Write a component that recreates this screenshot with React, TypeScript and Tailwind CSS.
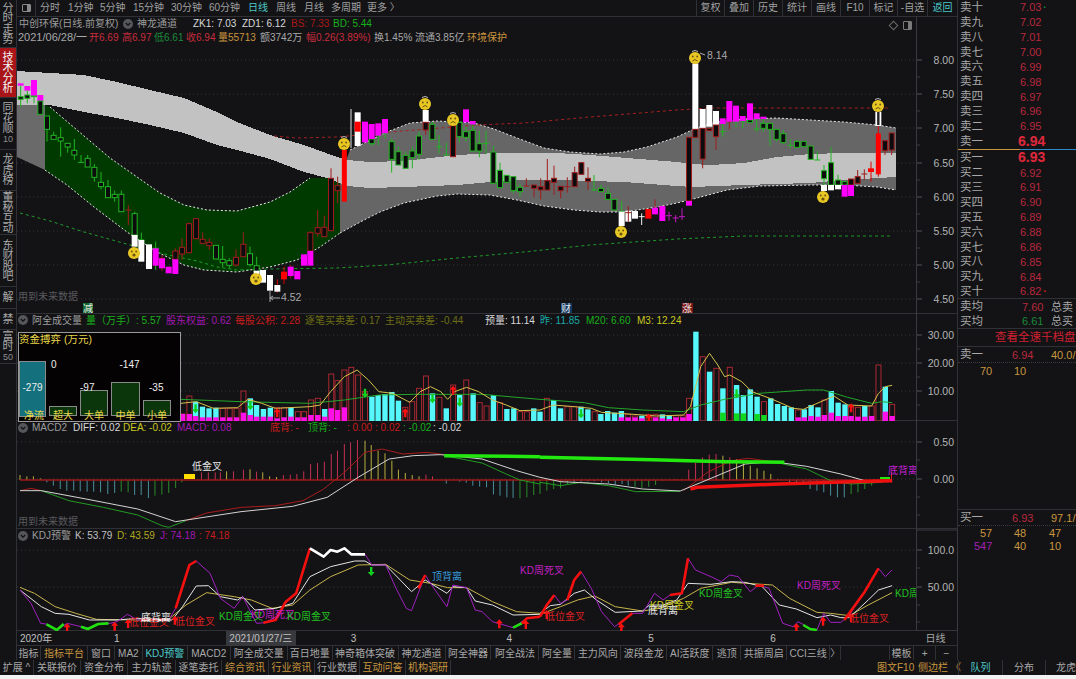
import React from "react";

type Pt = [number, number];
type Conv = (x: number, y: number) => Pt;
// candle: [zoom x, kind, body top, body bottom, wick high, wick low]
type Candle = [number, string, number, number, number?, number?];

const z9: Conv = (x, y) => [17 + x / 3, 70 + y / 3];
const z10: Conv = (x, y) => [237 + x / 3, 70 + y / 3];
const z11: Conv = (x, y) => [457 + x / 3, 70 + y / 3];
const z12: Conv = (x, y) => [677 + x / 3, 40 + y / 3];
const z5: Conv = (x, y) => [x / 2.904, 310 + y / 3];
const z6: Conv = (x, y) => [540 + x / 2.925, 310 + y / 3];
const z7: Conv = (x, y) => [x / 2.904, 525 + y / 3];
const z8: Conv = (x, y) => [540 + x / 2.925, 525 + y / 3];

const path = (list: Pt[], conv?: Conv) =>
  list.map(([x, y]) => (conv ? conv(x, y) : [x, y]).join(",")).join(" ");

const lightTop: Pt[] = [[17, 71], [50, 73], [84, 75], [117, 82], [150, 90], [184, 98], [217, 112], [237, 122], [270, 135], [304, 145], [337, 157], [347, 160], [370, 162], [404, 161], [457, 155], [497, 153], [557, 153], [590, 155], [677, 162], [692, 164], [710, 165], [744, 163], [777, 157], [810, 154], [844, 153], [896, 153]];
const lightBot: Pt[] = [[17, 105], [50, 105], [84, 112], [117, 118], [150, 125], [184, 133], [217, 145], [237, 150], [270, 159], [304, 172], [327, 178], [347, 186], [370, 188], [404, 187], [457, 185], [490, 182], [524, 180], [557, 180], [590, 181], [624, 182], [677, 186], [692, 187], [744, 185], [810, 183], [844, 180], [896, 177]];
const cloudTop: Pt[] = [[340, 178], [347, 158], [350, 150], [387, 132], [410, 123], [437, 121], [457, 122], [474, 123], [494, 129], [517, 138], [544, 148], [570, 152], [600, 154], [624, 152], [647, 147], [677, 137], [692, 130], [710, 123], [744, 119], [777, 118], [844, 122], [877, 125], [896, 128]];
const cloudBot: Pt[] = [[340, 233], [364, 220], [380, 212], [404, 203], [437, 196], [457, 194], [490, 195], [517, 200], [544, 206], [574, 210], [600, 212], [624, 212], [657, 207], [677, 203], [697, 198], [727, 190], [760, 186], [810, 185], [844, 185], [877, 187], [896, 190]];
const greenTop: Pt[] = [[45, 105], [50, 107], [77, 130], [110, 158], [137, 177], [160, 193], [184, 205], [207, 210], [237, 211], [270, 202], [290, 192], [310, 178]];
const greenBot: Pt[] = [[45, 170], [67, 185], [94, 207], [127, 232], [157, 252], [184, 265], [204, 270], [237, 272], [270, 267], [297, 260], [320, 247], [340, 233]];
const lowLine: Pt[] = [[20, 213], [50, 221], [84, 232], [130, 245], [164, 254], [197, 261], [217, 267], [237, 270], [270, 269], [337, 268], [387, 265], [457, 258], [524, 252], [590, 245], [677, 239], [744, 236], [890, 236]];
const highLine: Pt[] = [[274, 136], [297, 138], [337, 137], [390, 132], [453, 127], [477, 125], [524, 123], [590, 117], [677, 110], [710, 108], [890, 108]];

const candles9: Candle[] = [
  [11, "M", 40, 47], [31, "M", 48, 62], [51, "M", 30, 78], [70, "M", 75, 93],
  [11, "g", 80, 88, 47, 110], [31, "g", 75, 85, 62, 100], [51, "g", 78, 80, 78, 100], [70, "g", 93, 133],
  [90, "g", 138, 178, 138, 215], [110, "g", 196, 208, 185, 208], [131, "g", 203, 213, 172, 260], [152, "g", 220, 231, 220, 248],
  [172, "g", 241, 255, 207, 270], [192, "g", 277, 277, 255, 277], [212, "g", 265, 291, 255, 291], [232, "g", 292, 322, 282, 335],
  [252, "g", 337, 350, 306, 358], [273, "g", 350, 383, 330, 383], [293, "g", 373, 383, 362, 395], [313, "g", 373, 425, 362, 425],
  [334, "r", 420, 420, 405, 465], [353, "g", 431, 495, 425, 495], [353, "W", 495, 530], [373, "g", 510, 510, 488, 510], [373, "W", 510, 575],
  [396, "W", 523, 597], [416, "g", 535, 535, 515, 600], [416, "M", 535, 587], [435, "r", 565, 565, 555, 603], [435, "M", 565, 595],
  [455, "M", 590, 610], [475, "r", 543, 568, 535, 568], [475, "M", 568, 612], [495, "r", 532, 552, 505, 570], [516, "r", 461, 548, 458, 548],
  [537, "r", 446, 506], [557, "r", 508, 520, 487, 520], [577, "r", 517, 527, 505, 540], [597, "g", 526, 567], [617, "g", 568, 578, 528, 592],
  [637, "g", 572, 586, 565, 595], [657, "r", 562, 585, 538, 590],
];
const candles10: Candle[] = [
  [19, "r", 523, 560, 487, 560], [39, "g", 551, 584, 530, 590], [59, "g", 587, 605, 560, 605], [59, "W", 602, 612], [78, "W", 600, 638],
  [99, "W", 615, 662], [121, "W", 645, 665, 628, 668], [141, "R", 605, 628, 590, 642], [161, "M", 590, 618, 585, 625], [181, "M", 603, 628],
  [201, "M", 553, 587], [220, "r", 488, 543, 483, 543], [220, "M", 543, 587], [242, "r", 473, 490, 420, 500], [262, "r", 472, 500, 437, 500],
  [282, "r", 325, 482, 295, 482], [302, "r", 347, 362, 320, 400], [322, "B", 240, 395],
  [362, "W", 127, 228], [362, "R", 155, 185],
  [384, "M", 155, 217], [404, "g", 207, 221, 207, 228], [404, "M", 162, 207], [424, "g", 197, 197, 197, 225], [424, "M", 160, 197], [444, "g", 190, 190, 190, 205], [444, "M", 147, 190],
  [464, "g", 215, 268, 205, 308], [484, "g", 245, 285, 230, 285], [506, "g", 256, 295, 245, 295], [526, "g", 243, 263, 230, 295], [546, "g", 198, 253, 185, 270],
  [566, "W", 120, 157], [566, "r", 157, 180, 157, 195], [586, "g", 163, 208, 155, 208], [606, "g", 230, 230, 195, 250], [628, "g", 255, 255, 218, 255], [648, "r", 167, 260],
];
const candles11: Candle[] = [
  [7, "g", 157, 200, 157, 218], [27, "g", 185, 202, 170, 215], [27, "M", 118, 157], [47, "g", 181, 243, 165, 243], [47, "M", 153, 163],
  [67, "g", 221, 243, 182, 262], [87, "g", 220, 220, 182, 252], [109, "g", 246, 340, 228, 340], [129, "g", 301, 353, 278, 353], [149, "g", 316, 337],
  [169, "g", 320, 362, 320, 370], [189, "g", 352, 365, 342, 380], [208, "r", 348, 348, 325, 350], [231, "r", 345, 355, 345, 382], [251, "r", 350, 360, 325, 388],
  [271, "r", 332, 360, 267, 360], [291, "r", 325, 337, 287, 375], [311, "r", 349, 362, 349, 385], [331, "r", 350, 350, 322, 368], [353, "r", 308, 350, 290, 350],
  [373, "r", 278, 313], [393, "r", 325, 334, 292, 360], [411, "g", 360, 360, 315, 362], [432, "g", 355, 365, 344, 365], [453, "g", 370, 388, 352, 390],
  [472, "g", 388, 420], [494, "g", 425, 425, 393, 425], [494, "W", 425, 468], [514, "W", 422, 455], [514, "r", 428, 428, 408, 455], [534, "W", 423, 446],
  [554, "w", 440, 440, 430, 465], [574, "R", 417, 446], [594, "M", 413, 433, 388, 433], [616, "M", 408, 453], [636, "m", 437, 437, 425, 452], [656, "m", 444, 444, 435, 457],
];
const candles12: Candle[] = [
  [15, "m", 530, 530, 505, 540], [36, "r", 292, 483], [36, "M", 483, 497], [55, "W", 70, 268], [55, "r", 268, 292], [77, "W", 207, 265], [77, "r", 265, 357, 265, 385],
  [97, "W", 195, 260], [97, "r", 265, 272], [117, "W", 213, 255], [117, "r", 255, 290, 255, 330], [137, "g", 275, 275, 252, 290], [137, "M", 235, 252],
  [157, "r", 245, 245, 245, 268], [157, "M", 183, 245], [177, "g", 245, 245, 245, 262], [177, "M", 197, 245], [197, "g", 243, 243, 243, 265], [197, "M", 228, 243],
  [219, "g", 240, 248], [219, "M", 190, 240], [239, "g", 267, 267, 238, 275], [239, "M", 220, 237], [259, "g", 250, 265, 235, 275], [259, "M", 230, 237],
  [279, "g", 250, 268, 250, 317], [299, "g", 268, 298, 268, 305], [319, "g", 281, 308, 270, 312], [340, "g", 316, 316, 297, 325], [360, "g", 304, 322, 300, 325],
  [380, "g", 304, 320, 304, 322], [401, "g", 318, 358], [421, "g", 360, 360, 333, 360], [441, "g", 392, 416, 375, 435], [441, "W", 435, 453], [462, "g", 368, 435, 322, 435], [462, "W", 435, 451],
  [483, "g", 420, 435, 404, 435], [483, "W", 435, 448], [503, "g", 425, 435], [503, "M", 435, 470], [522, "r", 417, 435], [522, "M", 435, 468],
  [542, "r", 410, 430, 390, 430], [562, "r", 402, 402, 388, 420], [582, "R", 385, 396, 365, 425], [604, "W", 215, 258], [604, "k", 215, 258], [604, "B", 280, 403, 258, 410],
  [624, "r", 302, 332, 302, 345], [644, "r", 279, 330, 279, 345],
];

function CandleMark({ c, conv }: { c: Candle; conv: Conv }) {
  const [zx, kind, top, bot, hi, lo] = c;
  const [x, y1] = conv(zx, top);
  const [, y2] = conv(zx, bot);
  const yh = hi === undefined ? y1 : conv(zx, hi)[1];
  const yl = lo === undefined ? y2 : conv(zx, lo)[1];
  const wick = kind === "g" ? "#22b422" : kind === "r" ? "#a01c1c" : kind === "w" ? "#f0f0f0" : kind === "m" ? "#c018c0" : "#e00000";
  if (kind === "k") return <rect x={x - 1.2} y={y1} width={2.4} height={y2 - y1 - 1} fill="#222" />;
  if (kind === "W" || kind === "M" || kind === "R" || kind === "B") {
    const fill = kind === "W" ? "#ffffff" : kind === "M" ? "#ff00ff" : "#ff0000";
    const w = kind === "B" ? 5 : 6;
    return (
      <g>
        {hi !== undefined && <line x1={x} x2={x} y1={yh} y2={yl} stroke={kind === "M" ? "#a01c1c" : "#e00000"} />}
        <rect x={x - w / 2} y={y1} width={w} height={y2 - y1} fill={fill} />
      </g>
    );
  }
  return (
    <g>
      <line x1={x} x2={x} y1={yh} y2={yl} stroke={wick} />
      {top === bot ? (
        <line x1={x - 3} x2={x + 3} y1={y1} y2={y1} stroke={wick} />
      ) : (
        <rect x={x - 2.5} y={y1} width={5} height={y2 - y1} fill="#0c0c0e" stroke={wick} />
      )}
    </g>
  );
}

function Face({ x, y, sad }: { x: number; y: number; sad?: boolean }) {
  return (
    <g>
      {sad && <path d={`M${x - 3} ${y - 6.5} q3 -2 6 0`} stroke="#bbbbbb" fill="none" />}
      <circle cx={x} cy={y} r={6} fill="#e8c624" />
      <circle cx={x - 2.2} cy={y - 1.5} r={0.9} fill="#6a5410" />
      <circle cx={x + 2.2} cy={y - 1.5} r={0.9} fill="#6a5410" />
      {sad ? (
        <path d={`M${x - 2.5} ${y + 3} q2.5 -3 5 0`} stroke="#6a5410" fill="none" />
      ) : (
        <circle cx={x} cy={y + 2} r={1.6} fill="#6a5410" />
      )}
    </g>
  );
}

function Arrow({ at, up }: { at: Pt; up?: boolean }) {
  const [x, y] = at;
  const d = up ? 1 : -1;
  const points = [[x, y - 5 * d], [x + 3.5, y - 1 * d], [x + 1.2, y - 1 * d], [x + 1.2, y + 4 * d], [x - 1.2, y + 4 * d], [x - 1.2, y - 1 * d], [x - 3.5, y - 1 * d]];
  return <polygon points={points.map((p) => p.join(",")).join(" ")} fill={up ? "#ff1010" : "#10d020"} />;
}

function Chevron() {
  return (
    <svg width="10" height="10" viewBox="0 0 10 10" className="shrink-0">
      <circle cx="5" cy="5" r="5" fill="#55565a" />
      <path d="M2.8 4 L5 6.2 L7.2 4" stroke="#111" strokeWidth="1.2" fill="none" />
    </svg>
  );
}

function AxisLine({ y1, y2, ticks, minor }: { y1: number; y2: number; ticks: [number, string][]; minor: number[] }) {
  return (
    <g>
      <line x1={916.5} x2={916.5} y1={y1} y2={y2} stroke="#3a3b40" />
      {minor.map((y) => (
        <line key={y} x1={917} x2={920} y1={y} y2={y} stroke="#3a3b40" />
      ))}
      {ticks.map(([y, label]) => (
        <g key={label}>
          <line x1={917} x2={922} y1={y} y2={y} stroke="#55565c" />
          <line x1={17} x2={916} y1={y} y2={y} stroke="#34353a" strokeDasharray="1 3" />
          <text x={954} y={y + 4} textAnchor="end" fontSize="10.5" fill="#b4b4b4">{label}</text>
        </g>
      ))}
    </g>
  );
}

function Note({ x, y, fill, children }: { x: number; y: number; fill: string; children: React.ReactNode }) {
  return <text x={x} y={y + 4} fontSize="10" fill={fill}>{children}</text>;
}

function MainChart() {
  return (
    <svg width="941" height="297" viewBox="17 17 941 297" className="block absolute left-0 top-0">
      <AxisLine y1={17} y2={314} ticks={[[60, "8.00"], [94, "7.50"], [128, "7.00"], [163, "6.50"], [197, "6.00"], [231, "5.50"], [265, "5.00"], [299, "4.50"]]} minor={[77, 111, 145, 180, 214, 248, 282]} />
      <polygon points="17,105 45,105 45,170 30,163 17,157" fill="#6a6a6a" />
      <polygon points={path([...greenTop, [340, 178], ...[...greenBot].reverse()])} fill="#013a01" />
      <polygon points={path([...cloudTop, ...[...cloudBot].reverse()])} fill="#666666" />
      <polygon points={path([...lightTop, ...[...lightBot].reverse()])} fill="#c2c2c2" shapeRendering="crispEdges" />
      <polyline points={path(greenTop.slice(1))} fill="none" stroke="#e8e8e8" strokeDasharray="2 2" />
      <polyline points={path(greenBot)} fill="none" stroke="#e8e8e8" strokeDasharray="2 2" />
      <polyline points={path(cloudTop.slice(2))} fill="none" stroke="#e8e8e8" strokeDasharray="2 2" />
      <polyline points={path(cloudBot)} fill="none" stroke="#e8e8e8" strokeDasharray="2 2" />
      <polyline points={path(lowLine)} fill="none" stroke="#1f9a2a" strokeDasharray="3 3" />
      <polyline points={path(highLine)} fill="none" stroke="#a42020" strokeDasharray="3 3" />
      <line x1={351} x2={351} y1={109} y2={148} stroke="#7a7a7a" strokeWidth="2" />
      {candles9.map((c, i) => <CandleMark key={i} c={c} conv={z9} />)}
      {candles10.map((c, i) => <CandleMark key={i} c={c} conv={z10} />)}
      {candles11.map((c, i) => <CandleMark key={i} c={c} conv={z11} />)}
      {candles12.map((c, i) => <CandleMark key={i} c={c} conv={z12} />)}
      <Face x={134} y={253} />
      <Face x={256} y={279} />
      <Face x={344} y={144} sad />
      <Face x={425} y={104} sad />
      <Face x={453} y={120} sad />
      <Face x={621} y={232} />
      <Face x={695} y={58} sad />
      <Face x={878} y={106} sad />
      <Face x={823} y={197} />
      <path d="M700 53 L705 55" stroke="#b0b0b0" fill="none" />
      <text x={707} y={59} fontSize="10.5" fill="#a8a8a8">8.14</text>
      <path d="M270 290 V302 M270 298 H280 M270 298 l3 -2 M270 298 l3 2" stroke="#a8a8a8" fill="none" />
      <text x={281} y={301} fontSize="10.5" fill="#a8a8a8">4.52</text>
      <text x={18} y={300} fontSize="10" fill="#58585c">用到未来数据</text>
      <rect x={83} y={303} width={10} height={10} fill="#0e6a2a" />
      <text x={83} y={312} fontSize="10" fill="#e8e8e8">减</text>
      <rect x={561} y={303} width={11} height={10} fill="#0f3a66" />
      <text x={561} y={312} fontSize="10" fill="#e8e8e8">财</text>
      <rect x={682} y={303} width={11} height={10} fill="#7a1414" />
      <text x={682} y={312} fontSize="10" fill="#e8e8e8">涨</text>
    </svg>
  );
}

// volume bars: [zoom x, c=filled / r=hollow, top, bottom part top, bottom part colour]
type Vol = [number, string, number, number?, string?];
const vol5: Vol[] = [
  [530, "r", 312, 312, "m"], [550, "r", 258, 312, "m"], [568, "c", 275, 318, "m"], [588, "c", 290, 322, "m"], [607, "c", 295, 322, "m"], [627, "c", 293, 322, "m"],
  [647, "r", 295, 322, "m"], [667, "r", 295, 322, "m"], [687, "r", 295, 322, "m"], [707, "r", 243, 308, "m"], [727, "c", 265, 315, "m"], [745, "c", 285, 320, "m"],
  [765, "c", 297, 320, "m"], [785, "c", 293, 320, "m"], [805, "r", 293, 325, "m"], [825, "r", 293, 322, "m"], [845, "c", 292, 320, "m"], [865, "r", 305, 322, "m"],
  [883, "r", 305, 322, "m"], [903, "r", 270, 315, "m"], [923, "r", 265, 315, "m"], [943, "c", 297, 320, "m"], [962, "r", 192, 295, "m"], [980, "r", 212, 300, "m"],
  [1000, "r", 180, 292, "m"], [1020, "r", 172], [1040, "r", 195], [1060, "r", 245], [1080, "c", 260], [1098, "c", 255], [1118, "c", 252], [1138, "c", 246], [1157, "c", 272],
  [1177, "r", 292], [1197, "r", 275], [1217, "r", 235], [1237, "r", 198], [1256, "c", 250], [1276, "r", 262], [1296, "c", 295], [1316, "r", 225], [1335, "c", 255],
  [1354, "r", 210], [1374, "c", 250], [1393, "r", 278], [1413, "r", 288], [1433, "c", 255], [1452, "r", 278], [1472, "c", 297], [1492, "c", 295], [1510, "r", 305], [1530, "r", 305], [1550, "c", 295],
];
const vol6: Vol[] = [
  [0, "c", 305], [20, "r", 265], [40, "c", 270], [60, "c", 295], [80, "r", 290], [100, "r", 290], [120, "c", 290], [140, "c", 298], [160, "r", 305], [178, "c", 312], [198, "c", 303], [218, "c", 308],
  [238, "c", 303, 322, "m"], [258, "r", 313, 322, "m"], [278, "r", 318, 322, "m"], [298, "c", 317, 325, "m"], [318, "r", 314], [338, "r", 313, 322, "m"], [358, "c", 313, 325, "m"], [378, "c", 316, 327, "m"], [398, "r", 317, 322, "m"], [418, "r", 317, 322, "m"],
  [436, "r", 265, 312, "m"], [456, "c", 65], [476, "r", 140], [496, "c", 185], [516, "r", 175], [535, "c", 235, 308, "g"], [555, "r", 172], [575, "c", 225, 310, "g"], [595, "c", 255, 310, "g"], [615, "c", 238], [635, "c", 260, 312, "g"], [655, "r", 275, 315, "g"],
  [675, "c", 265], [695, "c", 282], [715, "c", 288], [735, "c", 292], [755, "r", 300, 322, "m"], [773, "c", 298, 322, "m"], [793, "c", 285, 318, "m"], [813, "c", 292, 320, "m"], [832, "r", 270, 315, "m"], [852, "c", 243, 308, "m"], [872, "c", 278, 318, "m"], [892, "c", 283, 318, "m"],
  [910, "r", 290, 318, "m"], [930, "r", 292, 320, "m"], [950, "c", 288, 320, "m"], [970, "r", 288, 318, "m"], [990, "r", 165], [1010, "c", 230, 305, "m"], [1030, "r", 283, 318, "m"],
];

function VolBar({ v, conv }: { v: Vol; conv: Conv }) {
  const [zx, kind, top, part, partColour] = v;
  const [x, y] = conv(zx, top);
  const base = 421;
  const partY = part === undefined ? base : conv(zx, part)[1];
  return (
    <g>
      {kind === "c" ? (
        <rect x={x - 2.7} y={y} width={5.4} height={base - y} fill="#55f7fb" />
      ) : (
        <rect x={x - 2.5} y={y} width={5} height={base - y} fill="none" stroke="#a82832" />
      )}
      {part !== undefined && <rect x={x - 2.7} y={partY} width={5.4} height={base - partY} fill={partColour === "m" ? "#ff10e8" : "#10d820"} />}
    </g>
  );
}

const m3a: Pt[] = [[525, 280], [570, 275], [620, 295], [690, 293], [720, 268], [760, 280], [800, 295], [900, 290], [930, 285], [960, 245], [1000, 200], [1037, 180], [1070, 210], [1100, 245], [1140, 250], [1190, 277], [1220, 245], [1250, 230], [1280, 245], [1300, 268], [1320, 245], [1355, 232], [1390, 245], [1430, 270], [1470, 285], [1510, 302], [1568, 300]];
const m3b: Pt[] = [[0, 300], [40, 285], [100, 290], [150, 295], [180, 307], [260, 312], [340, 318], [420, 315], [440, 290], [470, 170], [496, 130], [520, 165], [540, 200], [555, 195], [590, 215], [620, 245], [680, 268], [740, 295], [770, 298], [860, 258], [900, 285], [970, 288], [990, 250], [1010, 230], [1030, 226]];
const m20a: Pt[] = [[525, 268], [700, 275], [900, 280], [1000, 270], [1100, 255], [1200, 253], [1400, 253], [1568, 268]];
const m20b: Pt[] = [[0, 268], [130, 278], [200, 293], [300, 300], [420, 305], [470, 285], [540, 268], [640, 250], [780, 240], [830, 240], [900, 262], [970, 280], [1000, 275], [1030, 278]];

function VolumeChart() {
  return (
    <svg width="941" height="107" viewBox="17 314 941 107" className="block absolute left-0 top-0">
      <AxisLine y1={314} y2={421} ticks={[[335, "30.00"], [363, "20.00"], [391, "10.00"]]} minor={[349, 377, 405]} />
      {vol5.map((v, i) => <VolBar key={i} v={v} conv={z5} />)}
      {vol6.map((v, i) => <VolBar key={i} v={v} conv={z6} />)}
      <polyline points={path(m20a, z5)} fill="none" stroke="#22a52a" />
      <polyline points={path(m20b, z6)} fill="none" stroke="#22a52a" />
      <polyline points={path(m3a, z5)} fill="none" stroke="#d4c24a" />
      <polyline points={path(m3b, z6)} fill="none" stroke="#d4c24a" />
      {([[568, 295], [727, 285], [1060, 248], [1256, 265], [1335, 275]] as Pt[]).map((p, i) => <Arrow key={i} at={z5(p[0], p[1])} />)}
      {([[805, 310], [1177, 310], [1316, 242]] as Pt[]).map((p, i) => <Arrow key={i} at={z5(p[0], p[1])} up />)}
      <Arrow at={z6(120, 310)} />
      <Arrow at={z6(575, 250)} />
      <Arrow at={z6(318, 326)} up />
      <Arrow at={z6(910, 295)} up />
    </svg>
  );
}

function MoneyBox() {
  const bars = [
    { name: "超大", value: "0", h: "h-[10px]", w: "w-[28px]", top: "mt-[26px] pl-[2px] text-left" },
    { name: "大单", value: "-97", h: "h-[26px]", w: "w-[28px]", top: "mt-[49px] text-left" },
    { name: "中单", value: "-147", h: "h-[34px]", w: "w-[29px]", top: "mt-[26px] text-center pl-[8px]" },
    { name: "小单", value: "-35", h: "h-[16px]", w: "w-[28px]", top: "mt-[49px] pl-[6px] text-left" },
  ];
  return (
    <div className="absolute left-[1px] top-[18px] w-[163px] h-[90px] bg-[#050203] border border-[#9a9a9a] text-[#eeeeee] text-[10px] overflow-hidden">
      <div className="text-[#e8d84a] text-[10.5px] leading-[12px] whitespace-nowrap">资金搏弈 (万元)</div>
      <div className="absolute left-0 top-[28px] w-[27px] h-[56px] bg-[#13707c] border border-[#8a8a8a] flex items-center justify-center pb-[2px]">-279</div>
      <div className="absolute left-0 top-[77px] w-[30px] text-center text-[#e8d84a] leading-[12px]">净流</div>
      <div className="absolute left-[30px] top-0 right-0 bottom-0 flex gap-[3px]">
        {bars.map((b) => (
          <div key={b.name} className={`${b.w} relative h-full`}>
            <div className={`absolute left-0 right-0 bottom-[5px] ${b.h} bg-[#0b350b] border border-[#8a8a8a]`} />
            <div className={`${b.top} relative leading-[12px] whitespace-nowrap`}>{b.value}</div>
            <div className="absolute left-0 right-0 top-[77px] text-center text-[#e8d84a] leading-[12px]">{b.name}</div>
          </div>
        ))}
      </div>
    </div>
  );
}

// macd histogram: [zoom x, zoom y, colour key]
const hist5: [number, number, string][] = [
  [58, 498, "y"], [78, 502, "y"], [97, 502, "y"], [117, 508, "y"], [136, 520, "c"], [155, 530, "c"], [175, 540, "c"], [194, 545, "c"], [214, 545, "c"], [233, 547, "c"], [253, 548, "c"], [272, 548, "c"], [292, 550, "c"], [313, 555, "c"], [333, 552, "c"],
  [352, 548, "g"], [372, 550, "g"], [391, 558, "c"], [410, 558, "c"], [431, 567, "c"], [450, 560, "g"], [470, 557, "g"], [490, 552, "g"], [510, 537, "g"], [528, 520, "g"],
  [585, 490, "r"], [605, 490, "r"], [625, 490, "r"], [640, 490, "r"], [658, 487, "y"], [678, 487, "r"], [707, 482, "r"], [726, 481, "y"], [745, 488, "r"], [763, 490, "y"], [783, 502, "y"], [803, 504, "y"], [823, 498, "r"], [843, 497, "r"], [862, 495, "r"], [882, 487, "r"],
  [902, 465, "r"], [922, 462, "r"], [942, 458, "r"], [962, 435, "r"], [980, 425, "r"], [1000, 405, "r"], [1018, 400, "r"], [1038, 393, "r"], [1060, 395, "y"], [1078, 408, "y"], [1098, 425, "y"], [1118, 433, "y"], [1138, 455, "y"], [1157, 482, "y"], [1177, 492, "y"], [1197, 498, "y"], [1217, 502, "y"], [1237, 497, "r"], [1256, 502, "r"],
  [1296, 524, "c"], [1335, 518, "c"], [1354, 521, "c"], [1373, 530, "c"], [1393, 533, "c"], [1413, 535, "c"], [1433, 556, "c"], [1452, 560, "c"], [1472, 565, "c"], [1490, 567, "c"], [1510, 568, "g"], [1530, 565, "g"], [1550, 558, "g"],
];
const hist6: [number, number, string][] = [
  [0, 555, "g"], [20, 545, "g"], [40, 540, "g"], [60, 538, "g"], [80, 525, "g"], [100, 520, "c"], [120, 518, "c"], [140, 517, "c"], [160, 517, "c"], [180, 520, "c"], [200, 523, "c"], [220, 527, "c"], [240, 525, "c"], [258, 530, "c"], [278, 533, "g"], [298, 537, "g"], [318, 533, "g"], [338, 528, "g"], [358, 515, "g"],
  [395, 510, "r"], [415, 510, "r"], [435, 482, "r"], [455, 462, "r"], [475, 445, "r"], [495, 437, "r"], [515, 435, "r"], [535, 440, "y"], [555, 445, "r"], [575, 450, "y"], [595, 460, "y"], [615, 470, "y"], [635, 478, "y"], [655, 485, "y"], [675, 495, "y"], [695, 510, "y"],
  [730, 521, "c"], [750, 520, "c"], [770, 527, "c"], [790, 540, "c"], [810, 545, "c"], [830, 550, "c"], [850, 560, "c"], [870, 565, "c"], [890, 565, "c"], [910, 555, "g"], [930, 550, "g"], [950, 540, "g"], [970, 530, "g"],
];
const histColour: Record<string, string> = { y: "#b8ae3c", r: "#c23050", c: "#4a8e9c", g: "#2a8a2a" };

function MacdChart() {
  return (
    <svg width="941" height="107" viewBox="17 422 941 107" className="block absolute left-0 top-0">
      <AxisLine y1={422} y2={529} ticks={[[443, "0.50"], [480, "0.00"]]} minor={[461, 498, 516]} />
      {hist5.map(([x, y, c], i) => <line key={i} x1={x / 2.904} x2={x / 2.904} y1={481} y2={310 + y / 3} stroke={histColour[c]} />)}
      {hist6.map(([x, y, c], i) => <line key={i} x1={540 + x / 2.925} x2={540 + x / 2.925} y1={481} y2={310 + y / 3} stroke={histColour[c]} />)}
      <line x1={20} x2={892} y1={481} y2={481} stroke="#a01818" strokeWidth="1.4" />
      <rect x={184} y={475} width={11} height={5} fill="#ffe000" />
      <polyline points={path([[58, 545], [90, 538], [120, 545]], z5)} fill="none" stroke="#a81c1c" />
      <polyline points={path([[120, 545], [200, 575], [300, 595], [400, 618], [470, 650], [490, 655], [540, 635]], z5)} fill="none" stroke="#229a22" />
      <polyline points={path([[540, 635], [600, 612], [700, 595], [800, 590], [880, 575], [940, 540], [1000, 490], [1060, 430], [1110, 420], [1170, 435], [1240, 430], [1290, 437]], z5)} fill="none" stroke="#a81c1c" />
      <polyline points={path([[1290, 440], [1400, 462], [1470, 495], [1510, 513], [1568, 525]], z5)} fill="none" stroke="#229a22" />
      <polyline points={path([[0, 520], [60, 530], [120, 520], [200, 530], [280, 548], [410, 547]], z6)} fill="none" stroke="#229a22" />
      <polyline points={path([[420, 545], [490, 490], [560, 455], [610, 448], [680, 458]], z6)} fill="none" stroke="#a81c1c" />
      <polyline points={path([[680, 458], [780, 480], [850, 515], [910, 525], [1000, 520]], z6)} fill="none" stroke="#229a22" />
      <polyline points={path([[58, 545], [120, 545], [250, 570], [400, 600], [510, 638], [700, 608], [850, 592], [950, 565], [1040, 505], [1130, 450], [1200, 440], [1280, 437], [1400, 450], [1500, 485], [1568, 505]], z5)} fill="none" stroke="#d4d4d4" />
      <polyline points={path([[0, 505], [60, 518], [200, 525], [300, 540], [410, 546], [500, 508], [600, 465], [680, 458], [780, 472], [880, 495], [950, 515], [1030, 517]], z6)} fill="none" stroke="#d4d4d4" />
      <polyline points={path([[1290, 440], [1568, 443]], z5)} fill="none" stroke="#22e810" strokeWidth="3.5" />
      <polyline points={path([[0, 445], [330, 452], [540, 458], [715, 460]], z6)} fill="none" stroke="#22e810" strokeWidth="3.5" />
      <polyline points={path([[440, 540], [460, 535], [700, 525], [860, 520], [1030, 515]], z6)} fill="none" stroke="#f01010" strokeWidth="3.5" />
      <line x1={880} x2={890} y1={479} y2={479} stroke="#22e810" strokeWidth="2" />
      <line x1={891.5} x2={891.5} y1={473} y2={481} stroke="#e02020" />
      <text x={192} y={471} fontSize="10" fill="#e4e4e4">低金叉</text>
      <svg x={887} y={464} width={29} height={14} viewBox="887 464 29 14" overflow="hidden">
        <text x={888} y={475} fontSize="10" fill="#c020d0">底背离</text>
      </svg>
      <text x={18} y={526} fontSize="10" fill="#58585c">用到未来数据</text>
    </svg>
  );
}

const j7: Pt[] = [[58, 195], [90, 235], [118, 295], [140, 298], [165, 315], [195, 295], [235, 305], [260, 310], [290, 295], [320, 295], [340, 290], [370, 268], [400, 285], [490, 285], [510, 250], [550, 120], [570, 108], [610, 145], [640, 220], [680, 250], [705, 215], [745, 295], [770, 293], [810, 270], [830, 230], [860, 205], [900, 70], [940, 95], [960, 75], [980, 80], [1000, 70], [1020, 88], [1060, 88], [1080, 120], [1120, 120], [1150, 190], [1180, 250], [1195, 257], [1235, 150], [1260, 190], [1298, 245], [1315, 180], [1355, 188], [1380, 255], [1400, 260], [1430, 290], [1490, 308], [1530, 280], [1568, 275]];
const k7: Pt[] = [[58, 195], [120, 245], [160, 265], [200, 268], [260, 285], [340, 285], [400, 280], [500, 285], [530, 245], [570, 183], [605, 182], [640, 215], [690, 225], [705, 215], [740, 255], [800, 250], [850, 235], [900, 155], [960, 125], [1030, 108], [1060, 108], [1080, 120], [1120, 120], [1195, 200], [1235, 165], [1298, 205], [1315, 185], [1355, 188], [1380, 228], [1430, 240], [1490, 270], [1568, 268]];
const d7: Pt[] = [[58, 187], [100, 205], [160, 245], [220, 265], [280, 283], [400, 285], [490, 283], [540, 240], [600, 203], [680, 215], [730, 225], [790, 250], [850, 240], [900, 195], [960, 155], [1040, 120], [1120, 118], [1190, 165], [1250, 175], [1300, 188], [1355, 188], [1430, 230], [1500, 260], [1568, 265]];
const j8: Pt[] = [[0, 275], [20, 240], [42, 210], [60, 235], [80, 225], [100, 165], [120, 140], [150, 190], [180, 260], [218, 305], [240, 290], [270, 265], [300, 265], [335, 205], [360, 225], [380, 210], [415, 205], [433, 100], [455, 135], [500, 155], [530, 170], [555, 150], [580, 155], [615, 200], [640, 180], [670, 190], [710, 295], [740, 305], [755, 290], [790, 310], [810, 315], [830, 265], [850, 292], [880, 292], [905, 270], [950, 200], [990, 130], [1010, 155], [1030, 135]];
const k8: Pt[] = [[0, 265], [30, 242], [60, 238], [100, 205], [130, 195], [165, 225], [220, 262], [300, 258], [320, 240], [360, 240], [400, 225], [433, 175], [500, 178], [560, 170], [600, 172], [650, 185], [700, 240], [750, 252], [810, 278], [850, 270], [880, 278], [905, 278], [960, 225], [990, 195], [1030, 182]];
const d8: Pt[] = [[0, 268], [60, 245], [110, 225], [160, 213], [220, 245], [300, 258], [350, 250], [420, 220], [470, 190], [560, 172], [680, 180], [730, 220], [810, 262], [850, 265], [905, 272], [960, 240], [1030, 203]];

function Thick({ pts, conv, colour }: { pts: Pt[]; conv: Conv; colour: string }) {
  return <polyline points={path(pts, conv)} fill="none" stroke={colour} strokeWidth="2.6" strokeLinejoin="round" />;
}

function KdjChart() {
  return (
    <svg width="941" height="102" viewBox="17 529 941 102" className="block absolute left-0 top-0">
      <AxisLine y1={529} y2={631} ticks={[[550, "100.0"], [587, "50.00"]]} minor={[568, 605, 622]} />
      <rect x={916.5} y={530} width={41} height={101} fill="none" stroke="#3a3b40" />
      <polyline points={path(d7, z7)} fill="none" stroke="#c8b44a" />
      <polyline points={path(d8, z8)} fill="none" stroke="#c8b44a" />
      <polyline points={path(k7, z7)} fill="none" stroke="#e4e4e4" />
      <polyline points={path(k8, z8)} fill="none" stroke="#e4e4e4" />
      <polyline points={path(j7, z7)} fill="none" stroke="#a020c0" />
      <polyline points={path(j8, z8)} fill="none" stroke="#a020c0" />
      <Thick pts={[[510, 250], [550, 120], [570, 108]]} conv={z7} colour="#f51010" />
      <Thick pts={[[765, 293], [800, 285], [830, 230], [860, 205], [900, 70]]} conv={z7} colour="#f51010" />
      <Thick pts={[[1215, 190], [1235, 150]]} conv={z7} colour="#f51010" />
      <Thick pts={[[1515, 295], [1530, 280], [1568, 275]]} conv={z7} colour="#f51010" />
      <Thick pts={[[135, 298], [165, 315], [185, 297]]} conv={z7} colour="#22e010" />
      <Thick pts={[[235, 305], [255, 312], [285, 297], [315, 295]]} conv={z7} colour="#22e010" />
      <Thick pts={[[1490, 308], [1515, 295]]} conv={z7} colour="#22e010" />
      <Thick pts={[[900, 70], [940, 95], [960, 75], [980, 80], [1000, 70], [1020, 88], [1060, 88]]} conv={z7} colour="#ffffff" />
      <Thick pts={[[410, 285], [490, 285]]} conv={z7} colour="#ffffff" />
      <Thick pts={[[0, 275], [20, 240], [42, 210]]} conv={z8} colour="#f51010" />
      <Thick pts={[[80, 225], [100, 165], [120, 140]]} conv={z8} colour="#f51010" />
      <Thick pts={[[230, 298], [270, 265]]} conv={z8} colour="#f51010" />
      <Thick pts={[[380, 210], [415, 205], [433, 100]]} conv={z8} colour="#f51010" />
      <Thick pts={[[630, 182], [655, 182]]} conv={z8} colour="#f51010" />
      <Thick pts={[[890, 285], [950, 200], [990, 130]]} conv={z8} colour="#f51010" />
      <Thick pts={[[770, 300], [790, 312], [810, 315]]} conv={z8} colour="#22e010" />
      {([[195, 310], [333, 305], [372, 297], [508, 287], [1450, 298], [1527, 300]] as Pt[]).map((p, i) => <Arrow key={i} at={z7(p[0], p[1])} up />)}
      {([[20, 270], [238, 310], [750, 310], [828, 290], [910, 280]] as Pt[]).map((p, i) => <Arrow key={i} at={z8(p[0], p[1])} up />)}
      <Arrow at={z7(1078, 138)} />
      <Note x={129} y={622} fill="#d82020">低位金叉</Note>
      <Note x={141} y={617} fill="#e4e4e4">底背离</Note>
      <Note x={175} y={621} fill="#d82020">低位金叉</Note>
      <Note x={219} y={616} fill="#22c020">KD周金叉</Note>
      <Note x={251} y={614} fill="#c020c0">KD周死叉</Note>
      <Note x={287} y={616} fill="#22c020">KD周金叉</Note>
      <Note x={432} y={576} fill="#3a9ad8">顶背离</Note>
      <Note x={520} y={570} fill="#c020c0">KD周死叉</Note>
      <Note x={545} y={616} fill="#d82020">低位金叉</Note>
      <Note x={650} y={605} fill="#c8c820">KD周金叉</Note>
      <Note x={648} y={610} fill="#e4e4e4">底背离</Note>
      <Note x={699} y={593} fill="#22c020">KD周金叉</Note>
      <Note x={797} y={585} fill="#c020c0">KD周死叉</Note>
      <Note x={849} y={618} fill="#d82020">低位金叉</Note>
      <svg x={895} y={586} width={21} height={14} viewBox="895 586 21 14" overflow="hidden">
        <text x={895} y={597} fontSize="10" fill="#22c020">KD周金叉</text>
      </svg>
    </svg>
  );
}

function RailItem({ text, sub, active, h }: { text: string; sub?: string; active?: boolean; h: string }) {
  return (
    <div className={`${h} flex flex-col items-center justify-center border-b border-[#303136] ${active ? "bg-[#a81418] text-[#f4f4f4]" : "text-[#a8a8a8]"}`}>
      {text.split("").map((ch, i) => (
        <span key={i} className="text-[11px] leading-[10.5px]">{ch}</span>
      ))}
      {sub && <span className="text-[9px] leading-[11px] text-[#8c8c8c]">{sub}</span>}
    </div>
  );
}

function LeftRail() {
  return (
    <div className="w-[17px] shrink-0 border-r border-[#303136] flex flex-col">
      <RailItem text="分时走势" h="h-[48px]" />
      <RailItem text="技术分析" h="h-[50px]" active />
      <RailItem text="同花顺" sub="10" h="h-[52px]" />
      <RailItem text="龙虎榜" h="h-[41px]" />
      <RailItem text="董秘互动" h="h-[44px]" />
      <RailItem text="东财股吧" h="h-[52px]" />
      <RailItem text="解" h="h-[22px]" />
      <RailItem text="禁" h="h-[21px]" />
      <RailItem text="富时" sub="50" h="h-[34px]" />
    </div>
  );
}

function TopBar() {
  const left = [
    ["分时", "w-[28px]"], ["1分钟", "w-[32px]"], ["5分钟", "w-[33px]"], ["15分钟", "w-[38px]"], ["30分钟", "w-[38px]"], ["60分钟", "w-[39px]"],
    ["日线", "w-[28px] text-[#4cc8c8]"], ["周线", "w-[28px]"], ["月线", "w-[27px]"], ["多周期", "w-[36px]"], ["更多 〉", "w-[30px]"],
  ];
  const right = [
    ["复权", "w-[28px]"], ["叠加", "w-[29px]"], ["历史", "w-[29px]"], ["统计", "w-[29px]"], ["画线", "w-[29px]"], ["F10", "w-[29px]"], ["标记", "w-[28px]"], ["-自选", "w-[30px]"], ["返回", "w-[30px] text-[#4cc8c8]"],
  ];
  return (
    <div className="h-[17px] flex items-center border-b border-[#303136] text-[10px] text-[#a0a0a0] whitespace-nowrap">
      <div className="w-[19px] h-full border-r border-[#303136] flex items-center justify-center mr-[4px] ml-0">
        <div className="w-[9px] h-[8px] border border-[#8a8a8a] rounded-[1px] flex justify-end"><div className="w-[3px] bg-[#8a8a8a]" /></div>
      </div>
      {left.map(([t, c]) => <span key={t} className={c}>{t}</span>)}
      <div className="flex-1" />
      {right.map(([t, c]) => (
        <span key={t} className={`${c} h-full flex items-center justify-center border-l border-[#303136]`}>{t}</span>
      ))}
    </div>
  );
}

function MainHeader() {
  return (
    <div className="absolute left-0 top-0 right-[42px] text-[10px] whitespace-nowrap">
      <div className="h-[14px] flex items-center pl-[2px] text-[#9c9c9c]">
        <span className="w-[104px]">中创环保(日线.前复权)</span>
        <Chevron />
        <span className="ml-[4px] w-[56px]">神龙通道</span>
        <span className="w-[49px] text-[#d8d8d8]">ZK1: 7.03</span>
        <span className="w-[49px] text-[#d8d8d8]">ZD1: 6.12</span>
        <span className="w-[42px] text-[#a81818]">BS: 7.33</span>
        <span className="text-[#18b018]">BD: 5.44</span>
      </div>
      <div className="h-[13px] flex items-center pl-[1px]">
        <span className="w-[71px] text-[11px] text-[#a8a8a8]">2021/06/28/一</span>
        <span className="w-[33px] text-[#c82c3c]">开6.69</span>
        <span className="w-[32px] text-[#c82c3c]">高6.97</span>
        <span className="w-[32px] text-[#1c8a3a]">低6.61</span>
        <span className="w-[32px] text-[#c82c3c]">收6.94</span>
        <span className="w-[42px] text-[#c8963e]">量55713</span>
        <span className="w-[46px] text-[#a8a8a8]">额3742万</span>
        <span className="w-[68px] text-[#c82c3c]">幅0.26(3.89%)</span>
        <span className="w-[41px] text-[#a8a8a8]">换1.45%</span>
        <span className="w-[52px] text-[#a8a8a8]">流通3.85亿</span>
        <span className="text-[#c8963e]">环境保护</span>
      </div>
      <div className="absolute right-[3px] top-[4px] flex items-center gap-[6px]">
        <div className="w-[7px] h-[7px] rotate-45 border border-[#6a6a6a]" />
        <div className="w-[9px] h-[9px] border border-[#7a7a7a] rounded-[1px] flex justify-end"><div className="w-[3px] bg-[#7a7a7a]" /></div>
      </div>
    </div>
  );
}

function Pane({ h, children }: { h: string; children: React.ReactNode }) {
  return <div className={`${h} relative border-b border-[#303136]`}>{children}</div>;
}

function DateRow() {
  return (
    <div className="h-[15px] flex items-center text-[10px] text-[#c0c0c0] border-b border-[#303136] whitespace-nowrap">
      <span className="w-[97px] pl-[3px]">2020年</span>
      <span className="w-[112px]">1</span>
      <span className="w-[70px] bg-[#38393d] text-center">2021/01/27/三</span>
      <span className="w-[55px]" />
      <span className="w-[156px]">3</span>
      <span className="w-[142px]">4</span>
      <span className="w-[122px]">5</span>
      <span className="w-[144px]">6</span>
      <span className="w-[43px] text-center text-[#a8a8a8]">日线</span>
    </div>
  );
}

function TabRow() {
  const tabs = [
    ["指标", "w-[24px]"], ["指标平台", "w-[47px] text-[#c8963e]"], ["窗口", "w-[27px]"], ["MA2", "w-[28px]"], ["KDJ预警", "w-[45px] text-[#4cc8c8]"], ["MACD2", "w-[43px]"],
    ["阿全成交量", "w-[57px]"], ["百日地量", "w-[45px]"], ["神奇箱体突破", "w-[66px]"], ["神龙通道", "w-[47px]"], ["阿全神器", "w-[46px]"], ["阿全战法", "w-[48px]"], ["阿全量", "w-[36px]"],
    ["主力风向", "w-[46px]"], ["波段金龙", "w-[46px]"], ["AI活跃度", "w-[46px]"], ["逃顶", "w-[28px]"], ["共振周启", "w-[46px]"], ["CCI三线", "w-[43px]"], ["〉", "w-[11px]"],
    ["", "w-[49px]"], ["模板", "w-[24px]"], ["+", "w-[22px]"], ["−", "w-[21px]"],
  ];
  return (
    <div className="h-[14px] flex items-center text-[10px] text-[#a8a8a8] whitespace-nowrap">
      {tabs.map(([t, c], i) => (
        <span key={i} className={`${c} h-full flex items-center justify-center border-r border-[#303136] last:border-r-0`}>{t}</span>
      ))}
    </div>
  );
}

function BookRow({ label, value, bold, extra }: { label: string; value: string; bold?: boolean; extra?: React.ReactNode }) {
  return (
    <div className="h-[14.9px] flex items-center pl-[2px] whitespace-nowrap">
      <span className="w-[60px] text-[11.5px] text-[#a8a8a8]">{label}</span>
      {bold ? (
        <span className="-ml-[2px] text-[14px] font-bold text-[#e0283c]">{value}</span>
      ) : (
        <span className="text-[11px] text-[#b8283c]">{value}</span>
      )}
      {extra}
    </div>
  );
}

function OrderBook() {
  const sells = [["卖十", "7.03"], ["卖九", "7.02"], ["卖八", "7.01"], ["卖七", "7.00"], ["卖六", "6.99"], ["卖五", "6.98"], ["卖四", "6.97"], ["卖三", "6.96"], ["卖二", "6.95"]];
  const buys = [["买二", "6.92"], ["买三", "6.91"], ["买四", "6.90"], ["买五", "6.89"], ["买六", "6.88"], ["买七", "6.86"], ["买八", "6.85"], ["买九", "6.84"]];
  return (
    <div className="w-[118px] shrink-0 overflow-hidden flex flex-col text-[#a8a8a8]">
      {sells.map(([l, v], i) => (
        <BookRow key={l} label={l} value={v} extra={i === 0 ? <span className="ml-[2px] text-[6px] text-[#1c8a3a]">▪</span> : undefined} />
      ))}
      <div className="h-[14.9px] flex items-center pl-[2px]"><span className="w-[60px] text-[11.5px]">卖一</span><span className="-ml-[2px] text-[14px] font-bold text-[#e0283c]">6.94</span></div>
      <div className="h-[1px] mt-[0.5px] flex"><div className="w-[62px] bg-[#c8963e]" /><div className="flex-1 bg-[#2c88c8]" /></div>
      <BookRow label="买一" value="6.93" bold />
      {buys.map(([l, v]) => <BookRow key={l} label={l} value={v} />)}
      <div className="h-[15px] flex items-center pl-[2px] border-b border-[#303136] whitespace-nowrap">
        <span className="w-[60px] text-[11.5px]">买十</span>
        <span className="text-[11px] text-[#b8283c]">6.82</span>
        <span className="ml-[2px] text-[6px] text-[#e02020]">▪</span>
      </div>
      <div className="h-[15px] flex items-center pl-[2px] whitespace-nowrap">
        <span className="w-[62px] text-[11.5px]">卖均</span><span className="w-[29px] text-[11px] text-[#b8283c]">7.60</span><span className="text-[11px]">总卖</span>
      </div>
      <div className="h-[15px] flex items-center pl-[2px] whitespace-nowrap border-b border-[#303136]">
        <span className="w-[62px] text-[11.5px]">买均</span><span className="w-[29px] text-[11px] text-[#1c8a3a]">6.61</span><span className="text-[11px]">总买</span>
      </div>
      <div className="h-[18px] flex items-center pl-[37px] text-[#d02030] text-[11.5px] whitespace-nowrap border-b border-[#303136]">查看全速千档盘</div>
      <div className="h-[16px] flex items-center pl-[2px] whitespace-nowrap border-b border-dotted border-[#3a3b40]">
        <span className="w-[52px] text-[11.5px]">卖一</span><span className="w-[39px] text-[11px] text-[#b8283c]">6.94</span><span className="text-[11px] text-[#c8963e]">40.0/</span>
      </div>
      <div className="h-[15px] flex items-center whitespace-nowrap text-[11px] text-[#c8963e]">
        <span className="pl-[22px] w-[56px]">70</span><span>10</span>
      </div>
      <div className="h-[132px] border-b border-[#303136]" />
      <div className="h-[16px] flex items-center pl-[2px] whitespace-nowrap border-b border-dotted border-[#3a3b40]">
        <span className="w-[52px] text-[11.5px]">买一</span><span className="w-[39px] text-[11px] text-[#b8283c]">6.93</span><span className="text-[11px] text-[#c8963e]">97.1/</span>
      </div>
      <div className="h-[13px] flex items-center whitespace-nowrap text-[11px] text-[#c8963e]">
        <span className="pl-[22px] w-[56px]">57</span><span className="w-[35px]">48</span><span>47</span>
      </div>
      <div className="h-[13px] flex items-center whitespace-nowrap text-[11px] text-[#c8963e]">
        <span className="pl-[16px] w-[56px] text-[#a020b0]">547</span><span className="w-[35px]">40</span><span>10</span>
      </div>
    </div>
  );
}

function BottomBar() {
  const items = [
    ["扩展 ^", "w-[34px]"], ["关联报价", "w-[47px]"], ["资金分布", "w-[47px]"], ["主力轨迹", "w-[48px]"], ["逐笔委托", "w-[46px]"], ["综合资讯", "w-[47px] text-[#c8963e]"],
    ["行业资讯", "w-[46px] text-[#c8963e]"], ["行业数据", "w-[45px]"], ["互动问答", "w-[46px] text-[#c8963e]"], ["机构调研", "w-[45px] text-[#c8963e]"],
  ];
  return (
    <div className="h-[15px] flex items-center text-[10px] text-[#a8a8a8] whitespace-nowrap">
      {items.map(([t, c]) => (
        <span key={t} className={`${c} h-full flex items-center justify-center border-r border-[#303136]`}>{t}</span>
      ))}
      <div className="flex-1" />
      <span className="w-[41px] text-[#c8963e]">图文F10</span>
      <span className="w-[33px] text-[#c8963e]">侧边栏</span>
      <span className="w-[6px] text-[#c8963e]">《</span>
      <span className="w-[44px] ml-[1px] h-full flex items-center justify-center border-l border-[#303136] text-[#4cc8c8]">队列</span>
      <span className="w-[43px] h-full flex items-center justify-center border-l border-[#303136]">分布</span>
      <span className="w-[31px] h-full flex items-center pl-[10px] border-l border-[#303136] overflow-hidden">龙虎</span>
    </div>
  );
}

export default function App() {
  return (
    <div className="w-[1076px] h-[679px] overflow-hidden flex flex-col bg-[#131316] font-['Liberation_Sans','Noto_Sans_CJK_SC',sans-serif]">
      <div className="h-[660px] flex">
        <LeftRail />
        <div className="w-[941px] shrink-0 border-r border-[#303136] flex flex-col">
          <TopBar />
          <Pane h="h-[297px]">
            <MainChart />
            <MainHeader />
          </Pane>
          <Pane h="h-[108px]">
            <VolumeChart />
            <div className="absolute left-[1px] top-0 h-[13px] flex items-center text-[10px] whitespace-nowrap">
              <Chevron />
              <span className="ml-[4px] w-[54px] text-[#9c9c9c]">阿全成交量</span>
              <span className="w-[80px] text-[#18b018]">量（万手）: 5.57</span>
              <span className="w-[69px] text-[#a018b0]">股东权益: 0.62</span>
              <span className="w-[70px] text-[#c81c1c]">每股公积: 2.28</span>
              <span className="w-[80px] text-[#6e6e14]">逐笔买卖差: 0.17</span>
              <span className="w-[100px] text-[#6e6e14]">主动买卖差: -0.44</span>
              <span className="w-[55px] text-[#d8d8d8]">预量: 11.14</span>
              <span className="w-[46px] text-[#1ca8a8]">昨: 11.85</span>
              <span className="w-[51px] text-[#18b018]">M20: 6.60</span>
              <span className="text-[#c8c820]">M3: 12.24</span>
            </div>
            <MoneyBox />
          </Pane>
          <Pane h="h-[108px]">
            <MacdChart />
            <div className="absolute left-[1px] top-0 h-[13px] flex items-center text-[10px] whitespace-nowrap">
              <Chevron />
              <span className="ml-[4px] w-[41px] text-[#9c9c9c]">MACD2</span>
              <span className="w-[50px] text-[#d8d8d8]">DIFF: 0.02</span>
              <span className="w-[54px] text-[#c8c820]">DEA: -0.02</span>
              <span className="w-[93px] text-[#a018b0]">MACD: 0.08</span>
              <span className="w-[38px] text-[#c81c1c]">底背: -</span>
              <span className="w-[39px] text-[#18b018]">顶背: -</span>
              <span className="w-[28px] text-[#c81c1c]">: 0.00</span>
              <span className="w-[28px] text-[#c81c1c]">: 0.02</span>
              <span className="w-[30px] text-[#18b018]">: -0.02</span>
              <span className="text-[#d8d8d8]">: -0.02</span>
            </div>
          </Pane>
          <Pane h="h-[102px]">
            <KdjChart />
            <div className="absolute left-[1px] top-0 h-[13px] flex items-center text-[10px] whitespace-nowrap">
              <Chevron />
              <span className="ml-[4px] w-[43px] text-[#9c9c9c]">KDJ预警</span>
              <span className="w-[42px] text-[#c0c0c0]">K: 53.79</span>
              <span className="w-[43px] text-[#b0a81c]">D: 43.59</span>
              <span className="w-[39px] text-[#a018b0]">J: 74.18</span>
              <span className="text-[#c81c1c]">: 74.18</span>
            </div>
          </Pane>
          <DateRow />
          <TabRow />
        </div>
        <OrderBook />
      </div>
      <BottomBar />
      <div className="h-[4px] bg-[#f2f2f2]" />
    </div>
  );
}
